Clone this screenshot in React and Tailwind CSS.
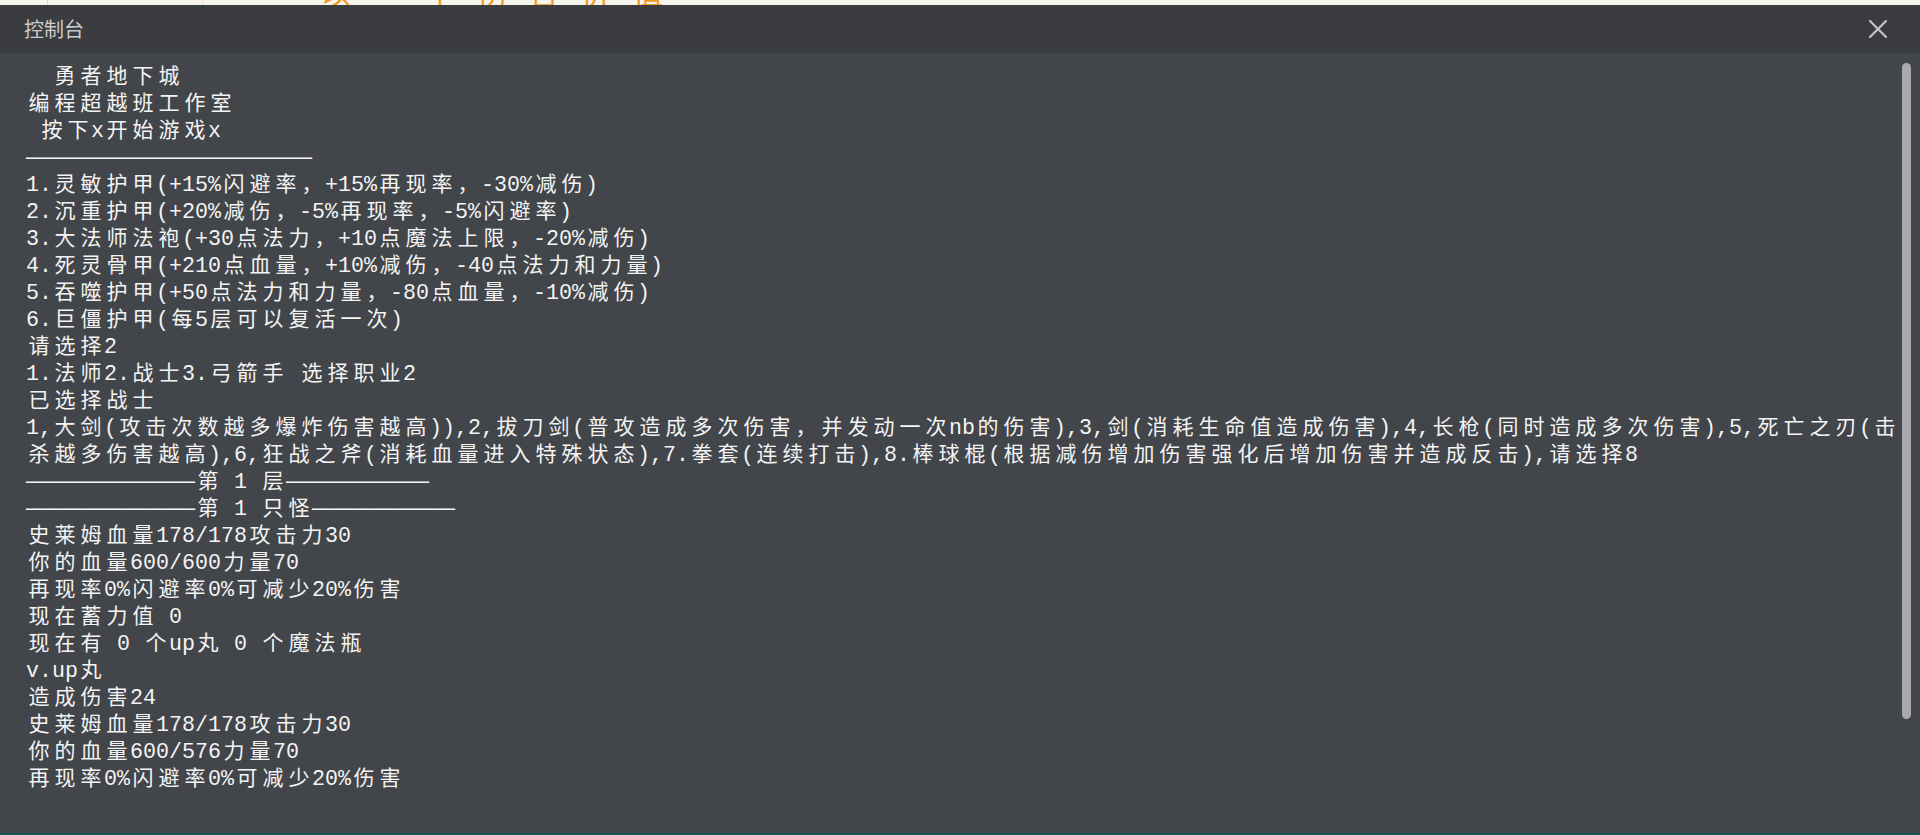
import React from 'react';

const LINES = [
  '  勇者地下城',
  '编程超越班工作室',
  ' 按下x开始游戏x',
  '——————————————————————',
  '1.灵敏护甲(+15%闪避率，+15%再现率，-30%减伤)',
  '2.沉重护甲(+20%减伤，-5%再现率，-5%闪避率)',
  '3.大法师法袍(+30点法力，+10点魔法上限，-20%减伤)',
  '4.死灵骨甲(+210点血量，+10%减伤，-40点法力和力量)',
  '5.吞噬护甲(+50点法力和力量，-80点血量，-10%减伤)',
  '6.巨僵护甲(每5层可以复活一次)',
  '请选择2',
  '1.法师2.战士3.弓箭手 选择职业2',
  '已选择战士',
  '1,大剑(攻击次数越多爆炸伤害越高)),2,拔刀剑(普攻造成多次伤害，并发动一次nb的伤害),3,剑(消耗生命值造成伤害),4,长枪(同时造成多次伤害),5,死亡之刃(击',
  '杀越多伤害越高),6,狂战之斧(消耗血量进入特殊状态),7.拳套(连续打击),8.棒球棍(根据减伤增加伤害强化后增加伤害并造成反击),请选择8',
  '—————————————第 1 层———————————',
  '—————————————第 1 只怪———————————',
  '史莱姆血量178/178攻击力30',
  '你的血量600/600力量70',
  '再现率0%闪避率0%可减少20%伤害',
  '现在蓄力值 0',
  '现在有 0 个up丸 0 个魔法瓶',
  'v.up丸',
  '造成伤害24',
  '史莱姆血量178/178攻击力30',
  '你的血量600/576力量70',
  '再现率0%闪避率0%可减少20%伤害',
];

// full-width chars take two terminal cells
const isWide = (ch) =>
  /[\u1100-\u115f\u2e80-\ua4cf\uac00-\ud7a3\uf900-\ufaff\ufe30-\ufe4f\uff00-\uff60\uffe0-\uffe6]/.test(ch);

// split a line into runs of half-width text and single wide chars
const toRuns = (text) => {
  const runs = [];
  for (const ch of Array.from(text)) {
    const wide = isWide(ch);
    const last = runs[runs.length - 1];
    if (!wide && last && !last.wide) last.text += ch;
    else runs.push({ wide, text: ch });
  }
  return runs;
};

const TermLine = ({ text }) => (
  <div className="h-[27px] leading-[27px] whitespace-pre font-['Noto_Sans_CJK_SC',sans-serif] text-[21px]">
    {toRuns(text).map((run, i) =>
      run.wide ? (
        <span key={i} className="inline-block w-[26px] text-center">
          {run.text}
        </span>
      ) : (
        <span key={i} className="font-['Liberation_Mono',monospace] text-[21.67px]">
          {run.text}
        </span>
      )
    )}
  </div>
);

const CloseIcon = () => (
  <svg width="18" height="18" viewBox="0 0 18 18" fill="none">
    <path d="M1 1L17 17M17 1L1 17" stroke="#c4c4c4" strokeWidth="2.2" strokeLinecap="round" />
  </svg>
);

const App = () => {
  return (
    <div className="h-[835px] w-full flex flex-col overflow-hidden bg-[#42454a]">
      {/* page behind the console */}
      <div className="h-[5px] flex overflow-hidden bg-[#f7f5ee]">
        <div className="w-[48px] border-r border-[#dedbd2]" />
        <div className="w-[155px] border-r border-[#ebe2c8]" />
        <span className="ml-[118px] -mt-[24px] text-[30px] leading-none tracking-[22px] text-[#f39a1e] font-['Noto_Sans_CJK_SC',sans-serif]">
          以一个伤害价值
        </span>
      </div>

      <div className="h-12 flex items-center justify-between pl-[24px] pr-[33px] bg-[#3b3c40]">
        <span className="text-[20px] text-[#cbcbcb] font-['Noto_Sans_CJK_SC',sans-serif]">控制台</span>
        <button className="flex items-center justify-center">
          <CloseIcon />
        </button>
      </div>

      <div className="flex-1 flex bg-[#42454a] min-h-0">
        <div className="flex-1 pl-[26px] pt-[8px] text-[#f4f4f4] overflow-hidden">
          {LINES.map((line, i) => (
            <TermLine key={i} text={line} />
          ))}
        </div>
        <div className="w-[9px] h-[656px] mt-[10px] mr-[9px] rounded-full bg-[#a9a9a9]" />
      </div>

      <div className="h-[2px] bg-[#0f5656]" />
    </div>
  );
};

export default App;
